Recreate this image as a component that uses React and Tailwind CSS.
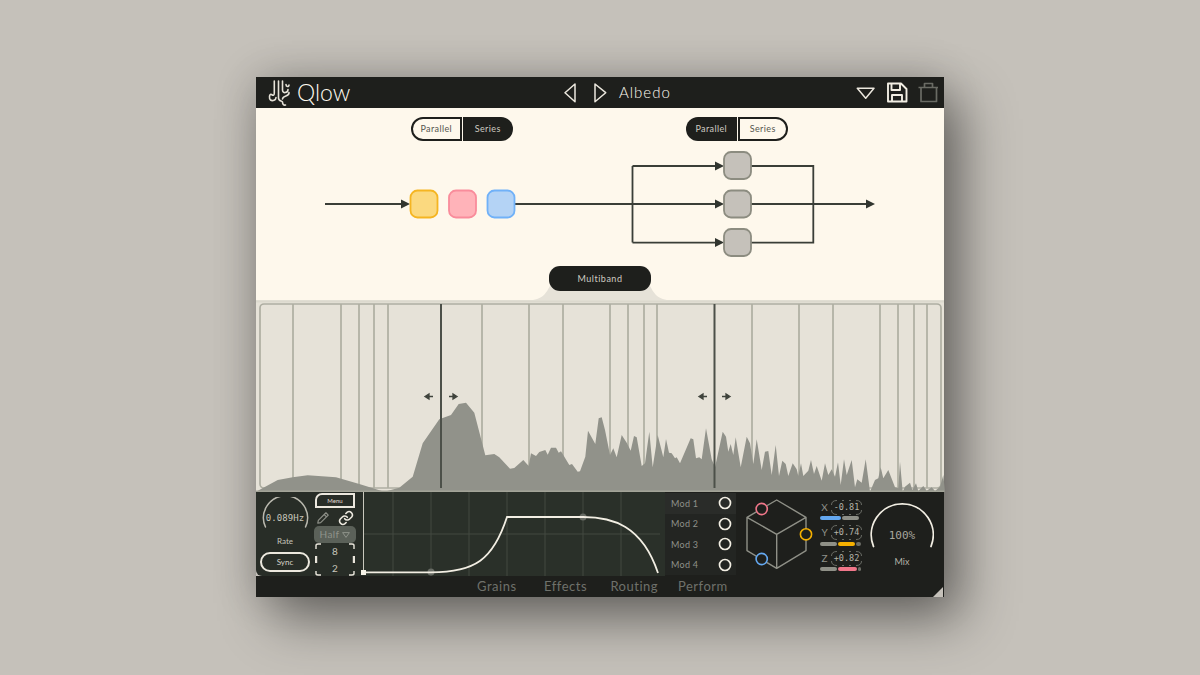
const z6 = [[0,335],[65,300],[110,292],[155,286],[240,292],[310,312],[385,335],[430,323],[470,290],[500,190],[550,118],[585,105],[608,72],[630,68],[655,98],[688,226],[715,222],[730,232],[762,266],[775,264],[802,240],[818,258],[825,220],[840,228],[850,216],[868,210],[875,224],[885,203],[900,203],[908,218],[915,214],[940,255],[948,252],[965,275],[972,274],[988,230],[996,152],[1018,192],[1028,115]];
const z7 = [[5,112],[15,150],[30,225],[40,205],[50,232],[65,165],[80,188],[92,212],[102,168],[110,172],[125,258],[135,250],[148,155],[158,262],[173,165],[190,232],[198,177],[207,218],[215,220],[225,235],[230,232],[240,250],[258,208],[272,175],[280,178],[288,235],[298,232],[305,238],[318,145],[335,238],[345,262],[368,155],[378,170],[385,215],[392,192],[400,225],[407,172],[422,262],[440,170],[450,190],[460,252],[470,178],[485,270],[495,215],[505,213],[515,285],[527,195],[537,288],[547,242],[557,252],[565,288],[578,250],[590,268],[595,288],[603,250],[610,288],[625,272],[633,240],[642,282],[650,258],[665,302],[675,250],[685,285],[695,268],[705,290],[714,247],[722,315],[732,238],[740,285],[755,240],[765,322],[772,298],[785,308],[797,238],[810,335],[825,300],[835,295],[842,262],[850,295],[865,270],[885,322],[895,325],[900,245],[908,335],[915,320],[930,308],[937,330],[948,310],[955,333],[970,318],[980,332],[995,322],[1005,333],[1020,320],[1030,285],[1035,335]];
const wavePts = [
  ...z6.map(([x, y]) => [256 + x / 3, 380 + y / 3]),
  ...z7.map(([x, y]) => [600 + x / 3, 380 + y / 3]),
];
const waveD = "M" + wavePts.map(([x, y]) => `${x.toFixed(1)},${y.toFixed(1)}`).join(" L") + " L945,492 L256,492 Z";
const gridX = [293, 341, 359, 374, 388, 482, 529, 563, 610, 628, 644, 657, 752, 799, 833, 880, 898, 914, 927];

const sans = "font-['Lato','Liberation_Sans',sans-serif]";
const mono = "font-['DejaVu_Sans_Mono','Liberation_Mono',monospace]";

function Toggle({ active }) {
  const on = "bg-[#1e1f1c] text-[#cfcbc2]";
  const off = "bg-[#fef8ec] text-[#55564f] border-2 border-[#1e1f1c]";
  return (
    <div className="flex gap-px h-[24px] text-[9px] tracking-[0.4px]">
      <div className={`w-[50.500px] rounded-l-[12px] flex items-center justify-center ${active === "Parallel" ? on : off}`}>Parallel</div>
      <div className={`w-[50.500px] rounded-r-[12px] flex items-center justify-center ${active === "Series" ? on : off}`}>Series</div>
    </div>
  );
}

function Arrow({ x, y }) {
  return <polygon points={`${x - 9},${y - 4.5} ${x},${y} ${x - 9},${y + 4.5}`} fill="#31352f" />;
}

function Diagram() {
  const line = { stroke: "#3a3e37", strokeWidth: 1.8, fill: "none" };
  return (
    <svg className="block w-full h-[125px]" viewBox="256 141 688 125">
      <path d="M325,204H405 M515,204H719 M632.500,166V242.600 M632.500,166H719 M632.500,242.600H719 M751,166H813.300V242.600H751 M751,204H869" {...line} />
      <Arrow x={410} y={204} />
      <Arrow x={724} y={166} />
      <Arrow x={724} y={204} />
      <Arrow x={724} y={242.6} />
      <Arrow x={875} y={204} />
      <rect x="410.500" y="190.500" width="27" height="27" rx="7" fill="#fbd97f" stroke="#f5b522" strokeWidth="1.800" />
      <rect x="449" y="190.500" width="27" height="27" rx="7" fill="#ffb3b9" stroke="#f98c9b" strokeWidth="1.800" />
      <rect x="487.500" y="190.500" width="27" height="27" rx="7" fill="#b4d3f5" stroke="#70b1f8" strokeWidth="1.800" />
      <rect x="724" y="152" width="27" height="27" rx="7" fill="#c5c1ba" stroke="#8c8c80" strokeWidth="1.800" />
      <rect x="724" y="190.500" width="27" height="27" rx="7" fill="#c5c1ba" stroke="#8c8c80" strokeWidth="1.800" />
      <rect x="724" y="229" width="27" height="27" rx="7" fill="#c5c1ba" stroke="#8c8c80" strokeWidth="1.800" />
    </svg>
  );
}

function Wave() {
  const arrow = (x, dir) => (
    <path d={dir < 0 ? `M${x + 4},396.500H${x - 1} M${x - 4},396.500L${x},394V399Z` : `M${x - 4},396.500H${x + 1} M${x + 4},396.500L${x},394V399Z`} stroke="#3f433c" strokeWidth="1.300" fill="#3f433c" />
  );
  return (
    <svg className="block w-full h-[192px] overflow-visible" viewBox="256 300 688 192">
      <path d="M528,300.500C543,300 546,293 550,286H650C654,293 657,300 672,300.500Z" fill="#e6e2d8" />
      <rect x="256" y="300" width="688" height="192" fill="#e6e2d8" />
      <rect x="256" y="300.500" width="688" height="2" fill="#dcd9ce" />
      <rect x="260" y="304" width="681" height="184" rx="4" fill="none" stroke="#aeaea2" strokeWidth="1.700" />
      {gridX.map((x) => (
        <path key={x} d={`M${x},304V488`} stroke="#aeaea2" strokeWidth="1.700" />
      ))}
      <path d={waveD} fill="#91928a" />
      <rect x="256" y="490.500" width="688" height="1.500" fill="#a3a498" />
      <path d="M441,304V488 M714.500,304V488" stroke="#4c5049" strokeWidth="2" />
      {arrow(429, -1)}
      {arrow(453, 1)}
      {arrow(703, -1)}
      {arrow(726, 1)}
    </svg>
  );
}

function Logo() {
  return (
    <div className="flex items-center gap-[5px] pl-[12px]">
      <svg width="24" height="28" viewBox="267 78 24 28" fill="none" stroke="#e6e2d8" strokeWidth="1.600" strokeLinecap="round">
        <path d="M273.300,80V92C273.300,95 272,94.500 270.500,93.500C268,92.500 268,98 269.500,99C271.500,100.500 275,99 275,96.500" />
        <path d="M277.500,80V97C277.500,100.500 281,99.500 281.500,101C281.500,103 282.500,104.500 284.500,104" />
        <path d="M281.500,80V89C281.500,93 287,92 287,88.500 M285,83.500C285,86 288,86 288,84 M288,91.500C288.500,96 282,94 281.500,98" />
      </svg>
      <span className={`${sans} text-[23px] font-light leading-none text-[#fffaf0]`}>Qlow</span>
    </div>
  );
}

function Header() {
  return (
    <div className="relative h-[31px] bg-[#1e1f1c] flex items-center justify-between shrink-0">
      <Logo />
      <div className="absolute left-[308px] top-0 h-full flex items-center">
        <svg width="16" height="20" viewBox="564 83 16 20" fill="none" stroke="#ece8de" strokeWidth="1.500" strokeLinejoin="round">
          <path d="M575,84L565,92.700L575,101.700Z" />
        </svg>
        <svg className="ml-[14px]" width="16" height="20" viewBox="594 83 16 20" fill="none" stroke="#ece8de" strokeWidth="1.500" strokeLinejoin="round">
          <path d="M595,84L605.700,92.700L595,101.700Z" />
        </svg>
        <span className="ml-[9px] text-[15px] font-light text-[#fffaf0] tracking-[1px]">Albedo</span>
      </div>
      <div className="flex items-center pr-[6px]">
        <svg width="19" height="12" viewBox="857 86 19 12" fill="none" stroke="#ece8de" strokeWidth="1.500" strokeLinejoin="round">
          <path d="M858.300,87.300H875L866.700,97.300Z" />
        </svg>
        <svg className="ml-[11px]" width="22" height="21" viewBox="887 82 22 21" fill="none" stroke="#f2eee3" strokeWidth="1.900" strokeLinejoin="round">
          <path d="M889,83.500H902L907.500,89V101.500H889Z M892.500,83.500V90H901V83.500 M893,101.500V95H903V101.500" />
        </svg>
        <svg className="ml-[10px]" width="20" height="21" viewBox="918 82 20 21" fill="none" stroke="#6a6b64" strokeWidth="1.700" strokeLinejoin="round">
          <path d="M921,88V101.500H936.500V88 M918.500,87.500H938 M924.500,87.500V83.500H932.500V87.500" />
        </svg>
      </div>
    </div>
  );
}

function Brackets() {
  return (
    <svg className="absolute inset-0 w-full h-full" viewBox="0 0 40 33" fill="none" stroke="#e9e5db" strokeWidth="1.400">
      <path d="M1,6V2.500Q1,1 3,1H6 M34,1H37Q39,1 39,2.500V6 M1,28V30.500Q1,32 3,32H6 M34,32H37Q39,32 39,30.500V28" />
      <path d="M1,13V20 M39,13V20" strokeWidth="2.400" />
    </svg>
  );
}

function LeftPanel() {
  return (
    <div className="w-[107px] bg-[#282d27] rounded-bl-[6px] flex text-[#d8d4ca] shrink-0">
      <div className="w-[58px] flex flex-col items-center pt-[5px]">
        <div className="relative w-[50px] h-[38px]">
          <svg className="absolute inset-0" width="50" height="38" viewBox="259 502 50 38" fill="none" stroke="#b9b8ae" strokeWidth="1.500">
            <path d="M264.500,532A22,22 0 1 1 304.500,532" strokeLinecap="round" />
          </svg>
          <div className={`absolute inset-0 flex items-center justify-center pt-[6px] ${mono} text-[9px] text-[#c7c5bb] tracking-[0.1px]`}>0.089Hz</div>
        </div>
        <div className="text-[8px] leading-[10px] mt-[1px] text-[#c7c5bb]">Rate</div>
        <div className="mt-[6px] w-[50px] h-[20px] border-2 border-[#ece8de] rounded-[10px] flex items-center justify-center text-[8px] text-[#d8d4ca]">Sync</div>
      </div>
      <div className="w-[40px] pt-[1px] flex flex-col ml-[1px]">
        <div className="h-[15px] border-2 border-[#ece8de] rounded-tl-[7px] flex items-center justify-center text-[6px] text-[#e3dfd5]">Menu</div>
        <div className="h-[18px] mt-[1px] flex items-center justify-between px-[1px]">
          <svg width="14" height="14" viewBox="0 0 24 24" fill="none" stroke="#8e9088" strokeWidth="2" strokeLinejoin="round">
            <path d="M17,3L21,7L8,20L3,21L4,16Z M14,6L18,10" />
          </svg>
          <svg width="16" height="16" viewBox="0 0 24 24" fill="none" stroke="#ece8de" strokeWidth="2.400" strokeLinecap="round">
            <path d="M10,13a5,5 0 0 0 7.500,.5l3,-3a5,5 0 0 0 -7,-7l-1.700,1.700" />
            <path d="M14,11a5,5 0 0 0 -7.500,-.5l-3,3a5,5 0 0 0 7,7l1.700,-1.700" />
          </svg>
        </div>
        <div className="h-[17px] -mx-[1px] bg-[#5b6159] rounded-[5px] flex items-center justify-center gap-[3px] text-[10px] text-[#8f938b] tracking-[0.4px]">
          Half
          <svg width="8" height="6" viewBox="0 0 8 6" fill="none" stroke="#8f938b" strokeWidth="1"><path d="M.6,.6H7.400L4,5.400Z" /></svg>
        </div>
        <div className="relative h-[33px] flex flex-col items-center justify-center text-[10px] leading-[16.500px] text-[#c7c5bb]">
          <Brackets />
          <span>8</span>
          <span>2</span>
        </div>
      </div>
    </div>
  );
}

function Graph() {
  return (
    <div className="w-[302px] shrink-0 bg-[#2a3029]">
      <svg className="block w-full h-[84px] overflow-visible" viewBox="363 492 302 84" fill="none">
        <path d="M393,492V576 M431,492V576 M469,492V576 M507,492V576 M545,492V576 M583,492V576 M621,492V576 M363,534H660" stroke="#434941" strokeWidth="1" />
        <path d="M363.500,492V572" stroke="#c9c8bd" strokeWidth="1" />
        <circle cx="431" cy="572" r="3.500" fill="#676b64" />
        <circle cx="583" cy="517" r="3.500" fill="#676b64" />
        <path d="M363,572.300H431C475,572 493,560 507,517H583C612,517 642,525 658,573" stroke="#f2eee3" strokeWidth="1.800" />
        <rect x="361" y="570" width="5" height="5" fill="#f7f3e8" />
      </svg>
    </div>
  );
}

function Mods() {
  return (
    <div className="w-[71px] shrink-0 bg-[#1e1f1c] flex flex-col text-[9px] text-[#8f918a] tracking-[0.3px] py-[1px]">
      {["Mod 1", "Mod 2", "Mod 3", "Mod 4"].map((m, i) => (
        <div key={m} className={`h-[20.500px] flex items-center justify-between pl-[6px] pr-[4px] ${i === 0 ? "bg-[#2a2c29]" : "bg-[#232522]"}`}>
          {m}
          <svg width="14" height="14" viewBox="0 0 14 14" fill="none" stroke="#f2eee3" strokeWidth="1.700"><circle cx="7" cy="7" r="5.500" /></svg>
        </div>
      ))}
    </div>
  );
}

function Cube() {
  return (
    <svg className="shrink-0" width="74" height="84" viewBox="740 492 74 84" fill="none">
      <path d="M776.700,500L806,517.300V550.700L776.700,568.300L747,550.700V517.300Z M747,517.300L776.700,534.300L806,517.300 M776.700,534.300V568.300" stroke="#8f9087" strokeWidth="1.400" strokeLinejoin="round" />
      <circle cx="761.700" cy="509" r="5.600" fill="#1e1f1c" stroke="#f0778a" strokeWidth="1.600" />
      <circle cx="806" cy="534.300" r="5.600" fill="#1e1f1c" stroke="#f5b000" strokeWidth="1.600" />
      <circle cx="761.700" cy="559" r="5.600" fill="#1e1f1c" stroke="#64a8f0" strokeWidth="1.600" />
    </svg>
  );
}

function Axis({ label, value, bar }) {
  return (
    <div className="h-[25.500px] flex flex-col">
      <div className="flex items-center h-[18px]">
        <span className="w-[9px] text-center text-[10px] text-[#8f918a]">{label}</span>
        <div className="relative w-[31px] ml-[2px] h-[15px] flex items-center justify-center">
          <svg className="absolute inset-0" width="31" height="15" viewBox="0 0 31 15" fill="none" stroke="#6a6c65" strokeWidth="1">
            <path d="M.5,5Q.5,.5 6,.5 M25,.5Q30.500,.5 30.500,5 M.5,10Q.5,14.500 6,14.500 M25,14.500Q30.500,14.500 30.500,10 M11,.5H13 M18,.5H20 M11,14.500H13 M18,14.500H20" />
          </svg>
          <span className={`${mono} text-[8.500px] text-[#b4b3a9]`}>{value}</span>
        </div>
      </div>
      <div className="flex gap-[1px] h-[4px] w-[41px]">{bar}</div>
    </div>
  );
}

function RightPanel() {
  const seg = (w, c) => <div className={`${w} ${c} rounded-full h-full`} />;
  return (
    <div className="flex-1 bg-[#1e1f1c] flex items-start pl-[4px] text-[#c7c5bb]">
      <Cube />
      <div className="ml-[6px] pt-[6px] flex flex-col">
        <Axis label="X" value="-0.81" bar={<>{seg("w-[21px]", "bg-[#64a8f0]")}{seg("w-[17px]", "bg-[#8f9087]")}</>} />
        <Axis label="Y" value="+0.74" bar={<>{seg("w-[17px]", "bg-[#8f9087]")}{seg("w-[17px]", "bg-[#f5b000]")}{seg("w-[5px]", "bg-[#6d6e67]")}</>} />
        <Axis label="Z" value="+0.82" bar={<>{seg("w-[17px]", "bg-[#8f9087]")}{seg("w-[19px]", "bg-[#f0778a]")}{seg("w-[3px]", "bg-[#6d6e67]")}</>} />
      </div>
      <div className="ml-[8px] pt-[10px] flex flex-col items-center">
        <div className="relative w-[64px] h-[46px]">
          <svg className="absolute inset-0" width="64" height="46" viewBox="870 502 64 46" fill="none" stroke="#f2eee3" strokeWidth="1.800" strokeLinecap="round">
            <path d="M873.500,546.500A31,31 0 1 1 931,546.500" />
          </svg>
          <div className={`absolute inset-0 flex items-center justify-center pt-[22px] ${mono} text-[11px] text-[#a8a79e]`}>100%</div>
        </div>
        <div className="text-[9px] mt-[7px] text-[#b4b3a9]">Mix</div>
      </div>
    </div>
  );
}

function Tabs() {
  return (
    <div className="relative h-[21px] bg-[#1e1f1c] flex items-center pl-[206.500px] text-[13px] text-[#6f716b] tracking-[0.5px]">
      {["Grains", "Effects", "Routing", "Perform"].map((t) => (
        <span key={t} className="w-[68.700px] text-center">{t}</span>
      ))}
      <svg className="absolute right-[1px] bottom-0" width="10" height="10" viewBox="0 0 10 10">
        <path d="M10,0V10H0Z" fill="#c5c1ba" />
      </svg>
    </div>
  );
}

export default function App() {
  return (
    <div className={`${sans} w-[1200px] h-[675px] overflow-hidden bg-[#c5c1ba] flex justify-center pt-[77px]`}>
      <div className="w-[688px] h-[520px] flex flex-col shadow-[18px_24px_50px_rgba(0,0,0,0.42),0_0_40px_rgba(0,0,0,0.2)]">
        <Header />
        <div className="h-[192px] bg-[#fef8ec] flex flex-col shrink-0">
          <div className="pt-[9px] pl-[155px] flex gap-[173px]">
            <Toggle active="Series" />
            <Toggle active="Parallel" />
          </div>
          <Diagram />
          <div className="relative z-10 h-[25px] w-[102px] mx-auto bg-[#1e1f1c] rounded-[11px] flex items-center justify-center text-[9px] text-[#cfcbc2] tracking-[0.5px]">
            Multiband
          </div>
        </div>
        <Wave />
        <div className="h-[84px] flex shrink-0">
          <LeftPanel />
          <Graph />
          <Mods />
          <RightPanel />
        </div>
        <Tabs />
      </div>
    </div>
  );
}
